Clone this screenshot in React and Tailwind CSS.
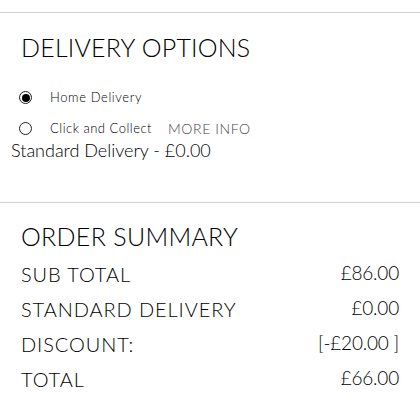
import { useState } from 'react'

function Radio({ checked }) {
  return (
    <span className="flex h-[13px] w-[13px] items-center justify-center rounded-full border border-[#222] bg-white">
      {checked && <span className="h-[8px] w-[8px] rounded-full bg-black" />}
    </span>
  )
}

export default function App() {
  const [method, setMethod] = useState('home')

  const rows = [
    ['SUB TOTAL', '£86.00'],
    ['STANDARD DELIVERY', '£0.00'],
    ['DISCOUNT:', '[-£20.00 ]'],
    ['TOTAL', '£66.00'],
  ]

  return (
    <div className="min-h-[420px] bg-white pt-[12px] font-light text-black" style={{ fontFamily: 'Lato, "Liberation Sans", sans-serif' }}>
      <div className="border-t border-[#d2d2d2] pb-[42px]">
        <h2 className="mt-[19px] px-[21px] text-[25px] font-light leading-[30px] tracking-[0.2px]">DELIVERY OPTIONS</h2>
        <div className="mt-[29px] flex flex-col gap-[18px] px-[19px]">
          <label className="flex items-center gap-[18px] text-[13px] leading-[13px] tracking-[0.6px]" onClick={() => setMethod('home')}>
            <Radio checked={method === 'home'} />
            <span>Home Delivery</span>
          </label>
          <label className="flex items-center gap-[18px] text-[13px] leading-[13px] tracking-[0.5px]" onClick={() => setMethod('collect')}>
            <Radio checked={method === 'collect'} />
            <span>Click and Collect</span>
            <span className="ml-[-2px] text-[14px] tracking-[0.6px] text-[#444]">MORE INFO</span>
          </label>
        </div>
        <p className="mt-[5px] px-[11px] text-[18px] leading-[20px]">Standard Delivery - £0.00</p>
      </div>

      <div className="border-t border-[#d2d2d2] px-[21px]">
        <h2 className="mt-[18px] text-[25px] font-light leading-[30px] tracking-[0.3px]">ORDER SUMMARY</h2>
        <div className="mt-[5px] flex flex-col">
          {rows.map(([label, value]) => (
            <div key={label} className="flex h-[35px] items-center justify-between text-[20px]">
              <span className="tracking-[0.9px]">{label}</span>
              <span className="text-[19px] tracking-[-0.2px]">{value}</span>
            </div>
          ))}
        </div>
      </div>
    </div>
  )
}
